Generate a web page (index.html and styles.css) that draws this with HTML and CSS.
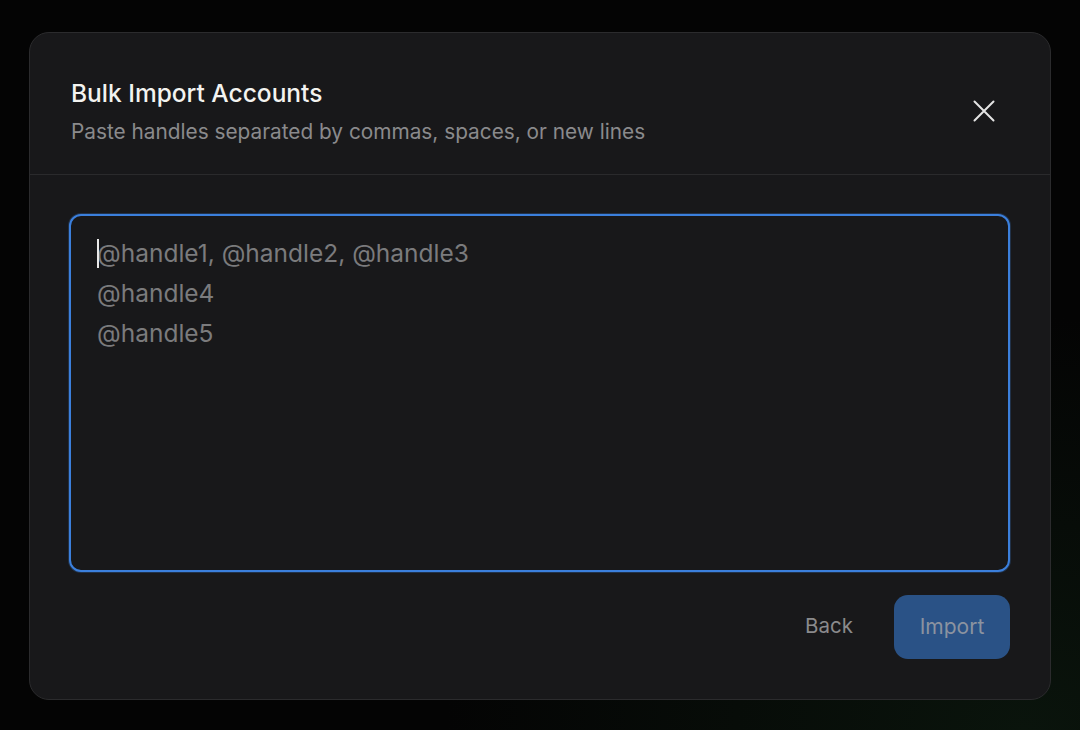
FILE: index.html
```html
<!DOCTYPE html>
<html>
<head>
<meta charset="utf-8">
<link rel="stylesheet" href="styles.css">
</head>
<body>
<div class="backdrop">
  <div class="modal">
    <div class="modal-header">
      <div class="titles">
        <h2 class="title">Bulk Import Accounts</h2>
        <p class="subtitle">Paste handles separated by commas, spaces, or new lines</p>
      </div>
      <button class="close" aria-label="Close">
        <svg width="22" height="22" viewBox="0 0 22 22" fill="none" stroke="#e4e4e4" stroke-width="2" stroke-linecap="round"><path d="M1.5 1.5L20.5 20.5M20.5 1.5L1.5 20.5"/></svg>
      </button>
    </div>
    <div class="modal-body">
      <div class="input">
        <div class="placeholder"><span class="caret"></span>@handle1, @handle2, @handle3<br>@handle4<br>@handle5</div>
      </div>
      <div class="actions">
        <button class="btn-back">Back</button>
        <button class="btn-import">Import</button>
      </div>
    </div>
  </div>
</div>
</body>
</html>
```
FILE: styles.css
```css
* { box-sizing: border-box; }
html, body { margin: 0; padding: 0; height: 100%; }
body {
  background: #040404;
  font-family: Inter, "Noto Sans", sans-serif;
}
.backdrop {
  width: 1080px;
  height: 730px;
  padding: 32px 29px 30px 29px;
  background: radial-gradient(ellipse at 95% 100%, #0a140c 0%, #040404 40%);
}
.modal {
  width: 1022px;
  height: 668px;
  background: #18181a;
  border: 1px solid #2b2b2d;
  border-radius: 20px;
  display: flex;
  flex-direction: column;
}
.modal-header {
  height: 142px;
  border-bottom: 1px solid #2a2a2c;
  display: flex;
  align-items: flex-start;
  justify-content: space-between;
  padding: 44px 55px 0 41px;
}
.title {
  margin: 0;
  font-size: 24.5px;
  font-weight: 500;
  color: #f3f3f0;
  line-height: 32px;
  letter-spacing: 0;
}
.subtitle {
  margin: 9px 0 0;
  font-size: 20.8px;
  color: #8a8a8c;
  line-height: 28px;
}
.close {
  margin-top: 23px;
  background: none;
  border: none;
  padding: 0;
  width: 22px;
  height: 22px;
  cursor: pointer;
}
.close svg { display: block; }
.modal-body {
  padding: 39px 40px 0 39px;
  display: flex;
  flex-direction: column;
}
.input {
  height: 358px;
  border: 2px solid #3b7fdc;
  box-shadow: 0 0 0 1px rgba(59, 127, 220, 0.25);
  border-radius: 12px;
  background: #18181a;
  padding: 17px 26px;
}
.placeholder {
  font-size: 24.5px;
  line-height: 40px;
  color: #7b7b7d;
  position: relative;
}
.caret {
  position: absolute;
  left: 0;
  top: 6px;
  width: 1.5px;
  height: 29px;
  background: #e8e8e8;
}
.actions {
  display: flex;
  justify-content: flex-end;
  align-items: center;
  gap: 41px;
  margin-top: 23px;
}
.btn-back {
  background: none;
  border: none;
  font-family: inherit;
  font-size: 20.5px;
  line-height: 24px;
  color: #8a8a8c;
  padding: 0 0 2px;
  cursor: pointer;
}
.btn-import {
  width: 116px;
  height: 64px;
  border: none;
  border-radius: 14px;
  background: #2a5286;
  color: #8b93a0;
  font-family: inherit;
  font-size: 21px;
  padding: 0 0 2px;
  cursor: pointer;
}
```
